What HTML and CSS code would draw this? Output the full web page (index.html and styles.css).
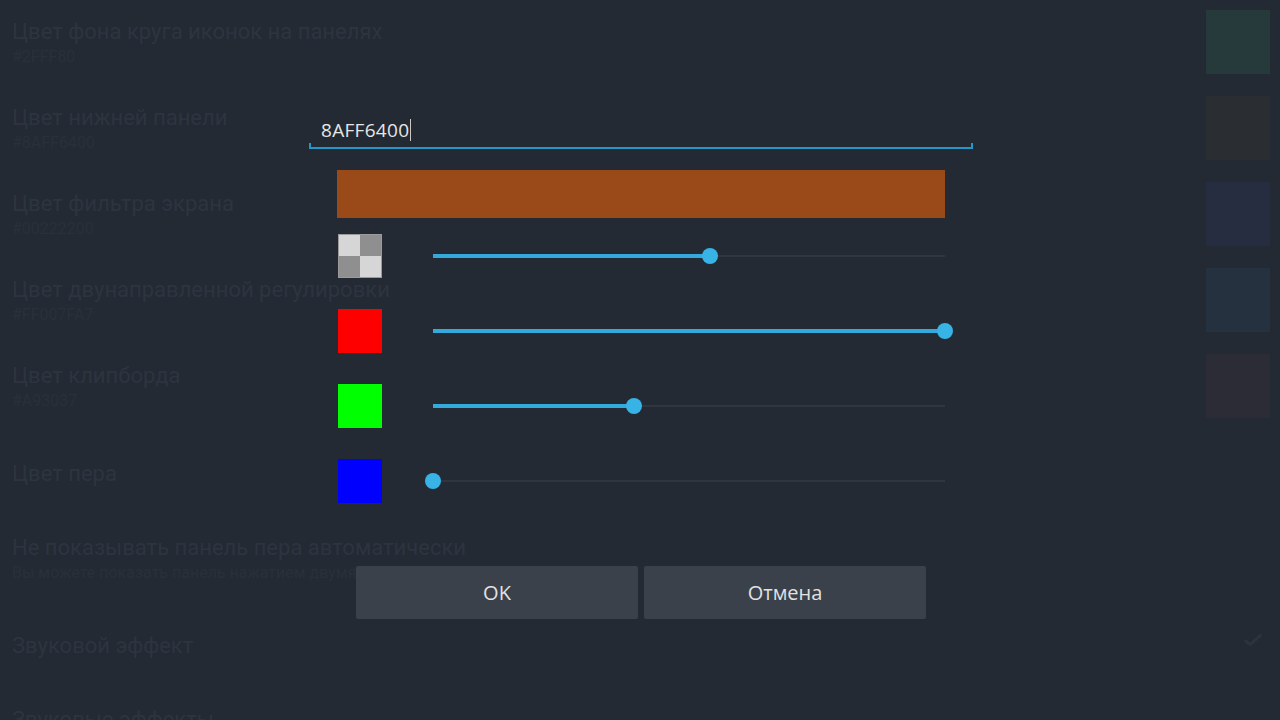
FILE: index.html
```html
<!DOCTYPE html>
<html lang="ru">
<head>
<meta charset="utf-8">
<title>Цвет нижней панели</title>
<link rel="stylesheet" href="styles.css">
</head>
<body>
<div class="screen">
  <ul class="prefs">
    <li class="pref">
      <div class="pref-text"><div class="pref-title">Цвет фона круга иконок на панелях</div><div class="pref-sub">#2FFF80</div></div>
      <div class="pref-swatch sw1"></div>
    </li>
    <li class="pref">
      <div class="pref-text"><div class="pref-title">Цвет нижней панели</div><div class="pref-sub">#8AFF6400</div></div>
      <div class="pref-swatch sw2"></div>
    </li>
    <li class="pref">
      <div class="pref-text"><div class="pref-title">Цвет фильтра экрана</div><div class="pref-sub">#00222200</div></div>
      <div class="pref-swatch sw3"></div>
    </li>
    <li class="pref">
      <div class="pref-text"><div class="pref-title">Цвет двунаправленной регулировки</div><div class="pref-sub">#FF007FA7</div></div>
      <div class="pref-swatch sw4"></div>
    </li>
    <li class="pref">
      <div class="pref-text"><div class="pref-title">Цвет клипборда</div><div class="pref-sub">#A93037</div></div>
      <div class="pref-swatch sw5"></div>
    </li>
    <li class="pref">
      <div class="pref-text"><div class="pref-title">Цвет пера</div></div>
    </li>
    <li class="pref">
      <div class="pref-text"><div class="pref-title">Не показывать панель пера автоматически</div><div class="pref-sub">Вы можете показать панель нажатием двумя пальцами.</div></div>
    </li>
    <li class="pref">
      <div class="pref-text"><div class="pref-title">Звуковой эффект</div></div>
      <svg class="check" width="22" height="22" viewBox="0 0 24 24"><path d="M4 13 L9 17 L20 7" fill="none" stroke="#2c333e" stroke-width="3.5" stroke-linecap="round" stroke-linejoin="round"/></svg>
    </li>
    <li class="pref">
      <div class="pref-text"><div class="pref-title">Звуковые эффекты</div><div class="pref-sub">&nbsp;</div></div>
    </li>
  </ul>

  <div class="dialog">
    <div class="field"><span class="field-value">8AFF6400</span><span class="caret"></span></div>
    <div class="preview"></div>
    <div class="channel">
      <div class="chip chip-alpha"><span class="c-l"></span><span class="c-d"></span><span class="c-d"></span><span class="c-l"></span></div>
      <div class="slider"><div class="fill" style="width:54.1%"></div><div class="thumb" style="left:54.1%"></div></div>
    </div>
    <div class="channel">
      <div class="chip chip-red"></div>
      <div class="slider"><div class="fill" style="width:100%"></div><div class="thumb" style="left:100%"></div></div>
    </div>
    <div class="channel">
      <div class="chip chip-green"></div>
      <div class="slider"><div class="fill" style="width:39.2%"></div><div class="thumb" style="left:39.2%"></div></div>
    </div>
    <div class="channel">
      <div class="chip chip-blue"></div>
      <div class="slider"><div class="fill" style="width:0%"></div><div class="thumb" style="left:0%"></div></div>
    </div>
    <div class="buttons">
      <button class="btn">OK</button>
      <button class="btn">Отмена</button>
    </div>
  </div>
</div>
</body>
</html>
```

FILE: styles.css
```css
* { box-sizing: border-box; }
html, body { margin: 0; padding: 0; }
body {
  width: 1280px;
  height: 720px;
  overflow: hidden;
  background: #232a34;
  font-family: Roboto, "Noto Sans", sans-serif;
}
.screen {
  position: relative;
  width: 1280px;
  height: 720px;
  overflow: hidden;
}
.prefs {
  list-style: none;
  margin: 0;
  padding: 1px 0 0 0;
}
.pref {
  height: 86px;
  display: flex;
  align-items: center;
  padding: 0 10px 0 12px;
}
.pref-text {
  flex: 1;
  display: flex;
  flex-direction: column;
}
.pref-title {
  font-size: 22px;
  line-height: 26px;
  color: #2d343f;
}
.pref-sub {
  font-size: 16px;
  line-height: 24px;
  color: #29303a;
}
.pref-swatch {
  width: 64px;
  height: 64px;
  margin-top: -4px;
}
.sw1 { background: #263a3b; }
.sw2 { background: #2a2d31; }
.sw3 { background: #272d40; }
.sw4 { background: #25313f; }
.sw5 { background: #2c2c36; }
.check { margin-right: 6px; margin-top: -12px; }

.dialog {
  position: absolute;
  left: 309px;
  top: 112px;
  width: 664px;
  font-family: "Open Sans", "Noto Sans", sans-serif;
}
.field {
  position: relative;
  height: 37px;
  display: flex;
  align-items: center;
  padding-left: 12px;
  border-bottom: 2px solid #2298c8;
}
.field::before, .field::after {
  content: "";
  position: absolute;
  bottom: -2px;
  width: 2px;
  height: 6px;
  background: #2298c8;
}
.field::before { left: 0; }
.field::after { right: 0; }
.field-value {
  font-size: 19px;
  color: #e6e6e6;
  letter-spacing: 0.3px;
}
.caret {
  display: inline-block;
  width: 1px;
  height: 22px;
  background: #c8c8c8;
  margin-left: 1px;
}
.preview {
  height: 48px;
  margin: 21px 28px 0 28px;
  background: #9a4918;
}
.channel {
  height: 75px;
  display: flex;
  align-items: center;
  padding-left: 29px;
}
.chip {
  width: 44px;
  height: 44px;
  flex: none;
}
.chip-alpha {
  display: grid;
  grid-template-columns: 1fr 1fr;
  grid-template-rows: 1fr 1fr;
  border: 1px solid #9a9a9a;
}
.c-l { background: #d6d6d6; }
.c-d { background: #8f8f8f; }
.chip-red { background: #ff0000; }
.chip-green { background: #00ff00; }
.chip-blue { background: #0000ff; }
.slider {
  position: relative;
  width: 512px;
  height: 2px;
  margin-left: 51px;
  background: #2f3641;
}
.fill {
  position: absolute;
  left: 0;
  top: -1px;
  height: 4px;
  background: #33a9dc;
}
.thumb {
  position: absolute;
  top: 1px;
  width: 16px;
  height: 16px;
  margin-left: -8px;
  margin-top: -8px;
  border-radius: 50%;
  background: #37b3e6;
}
.buttons {
  display: flex;
  gap: 6px;
  margin: 48px 0 0 47px;
}
.btn {
  width: 282px;
  height: 53px;
  border: 0;
  border-radius: 2px;
  background: #3a414b;
  color: #e2e2e2;
  font-family: "Open Sans", "Noto Sans", sans-serif;
  font-size: 20px;
  padding: 0;
}
```
